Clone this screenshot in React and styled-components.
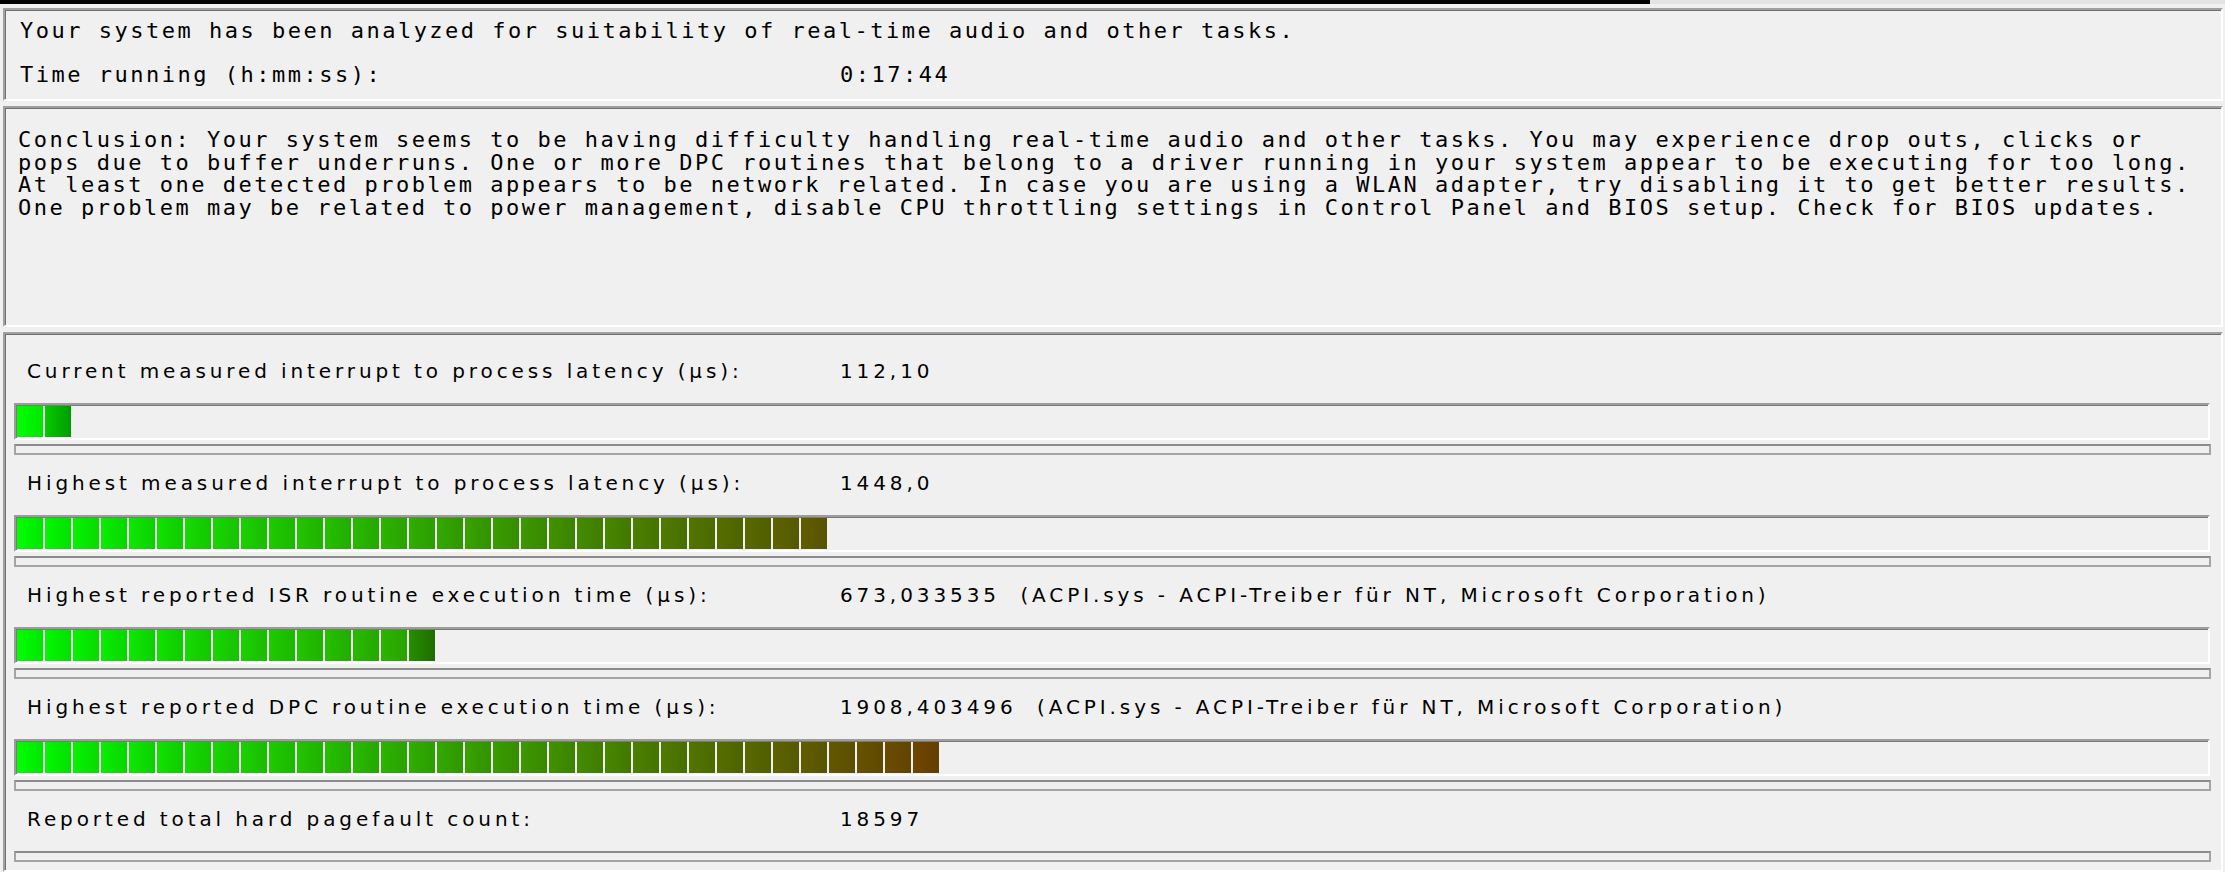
import styled, { createGlobalStyle } from "styled-components";

const GlobalStyle = createGlobalStyle`
  html, body {
    margin: 0;
    padding: 0;
    background: #f0f0f0;
    overflow: hidden;
  }
  #root {
    height: 872px;
    overflow: hidden;
  }
`

const Page = styled.div`
  width: 2225px;
  height: 872px;
  box-sizing: border-box;
  padding: 0 2px 0 3px;
  display: flex;
  flex-direction: column;
  gap: 5px;
  background: #f0f0f0;
  color: #000;
`
const TopStrip = styled.div`
  height: 4px;
  margin: 0 -2px 0 -3px;
  margin-bottom: -1px;
  display: flex;
  background: #e4e4e4;

  & > span {
    width: 1650px;
    background: #000;
  }
`
const Panel = styled.div`
  box-sizing: border-box;
  height: ${(p) => p.$height || "auto"};
  border-style: solid;
  border-width: 2px;
  border-color: #a0a0a0 #ffffff #ffffff #a0a0a0;
  box-shadow: inset 1px 1px 0 #707070;
  padding: ${(p) => p.$pad || "0"};
  flex: ${(p) => (p.$grow ? "1" : "none")};
`
const MonoRow = styled.div`
  display: flex;
  height: ${(p) => p.$h || 44}px;
  align-items: center;
  font-family: "DejaVu Sans Mono", "Liberation Mono", monospace;
  font-size: 22px;
  letter-spacing: 2.5px;
  white-space: pre;

  & > span:first-child {
    width: 820px;
  }
`
const Conclusion = styled.p`
  margin: 0;
  font-family: "DejaVu Sans Mono", "Liberation Mono", monospace;
  font-size: 22px;
  letter-spacing: 2.5px;
  line-height: 22.7px;
  white-space: pre;
`
const Row = styled.div`
  display: flex;
  flex-direction: column;
`
const Label = styled.div`
  height: 60px;
  box-sizing: border-box;
  padding: 0 0 21px 22px;
  display: flex;
  align-items: flex-end;
  font-family: "DejaVu Sans", "Liberation Sans", sans-serif;
  font-size: 20px;
  line-height: 22px;
  letter-spacing: 3.9px;
  white-space: pre;

  & > span:first-child {
    width: 813px;
    flex: none;
  }
`
const Meter = styled.div`
  height: 37px;
  box-sizing: border-box;
  margin: 0 11px 0 9px;
  border-style: solid;
  border-width: 2px;
  border-color: #9c9c9c #ffffff #ffffff #9c9c9c;
  box-shadow: inset 1px 1px 0 #7a7a7a;
  padding: 1px;
  display: flex;
  gap: 2px;
`
const Segment = styled.div`
  width: 26px;
  height: 100%;
  flex: none;
  background: ${(p) => `linear-gradient(to right, ${p.$from}, ${p.$to})`};
`
const Track = styled.div`
  height: 11px;
  box-sizing: border-box;
  margin: ${(p) => (p.$tight ? "0" : "4px")} 10px 0 9px;
  border: 2px solid #a4a4a4;
  border-top-color: #8c8c8c;
  background: #f0f0f0;
`

const rgb = (c, k = 1) =>
  `rgb(${Math.round(c[0] * k)}, ${Math.round(c[1] * k)}, ${Math.round(c[2] * k)})`

function segColor(i) {
  const t = i / 32;
  return [110 * t, 255 - 185 * t, 0];
}

function Bar({ count, dimLast }) {
  const segs = [];
  for (let i = 0; i < count; i++) {
    const c = segColor(i);
    const last = i === count - 1;
    const from = last && dimLast ? rgb(c, 0.82) : rgb(c, 1);
    const to = last && dimLast ? rgb(c, 0.62) : rgb(c, 0.9);
    segs.push(<Segment key={i} $from={from} $to={to} />);
  }
  return <Meter>{segs}</Meter>;
}

const rows = [
  { label: "Current measured interrupt to process latency (µs):", value: "112,10", segs: 2, dimLast: true },
  { label: "Highest measured interrupt to process latency (µs):", value: "1448,0", segs: 29 },
  {
    label: "Highest reported ISR routine execution time (µs):",
    value: "673,033535  (ACPI.sys - ACPI-Treiber für NT, Microsoft Corporation)",
    segs: 15,
    dimLast: true,
  },
  {
    label: "Highest reported DPC routine execution time (µs):",
    value: "1908,403496  (ACPI.sys - ACPI-Treiber für NT, Microsoft Corporation)",
    segs: 33,
  },
  { label: "Reported total hard pagefault count:", value: "18597", segs: 0 },
];

const conclusion = [
  "Conclusion: Your system seems to be having difficulty handling real-time audio and other tasks. You may experience drop outs, clicks or",
  "pops due to buffer underruns. One or more DPC routines that belong to a driver running in your system appear to be executing for too long.",
  "At least one detected problem appears to be network related. In case you are using a WLAN adapter, try disabling it to get better results.",
  "One problem may be related to power management, disable CPU throttling settings in Control Panel and BIOS setup. Check for BIOS updates.",
];

export default function App() {
  return (
    <>
      <GlobalStyle />
      <Page>
        <TopStrip><span /></TopStrip>
        <Panel $height="93px" $pad="0 0 0 15px">
          <MonoRow $h={40}>
            <span>Your system has been analyzed for suitability of real-time audio and other tasks.</span>
          </MonoRow>
          <MonoRow $h={48}>
            <span>Time running (h:mm:ss):</span>
            <span>0:17:44</span>
          </MonoRow>
        </Panel>
        <Panel $height="221px" $pad="21px 0 0 13px">
          {conclusion.map((line) => (
            <Conclusion key={line}>{line}</Conclusion>
          ))}
        </Panel>
        <Panel $grow $pad="9px 0 0 0">
          {rows.map((r) => (
            <Row key={r.label}>
              <Label>
                <span>{r.label}</span>
                <span>{r.value}</span>
              </Label>
              {r.segs > 0 && <Bar count={r.segs} dimLast={r.dimLast} />}
              <Track $tight={r.segs === 0} />
            </Row>
          ))}
        </Panel>
      </Page>
    </>
  );
}
